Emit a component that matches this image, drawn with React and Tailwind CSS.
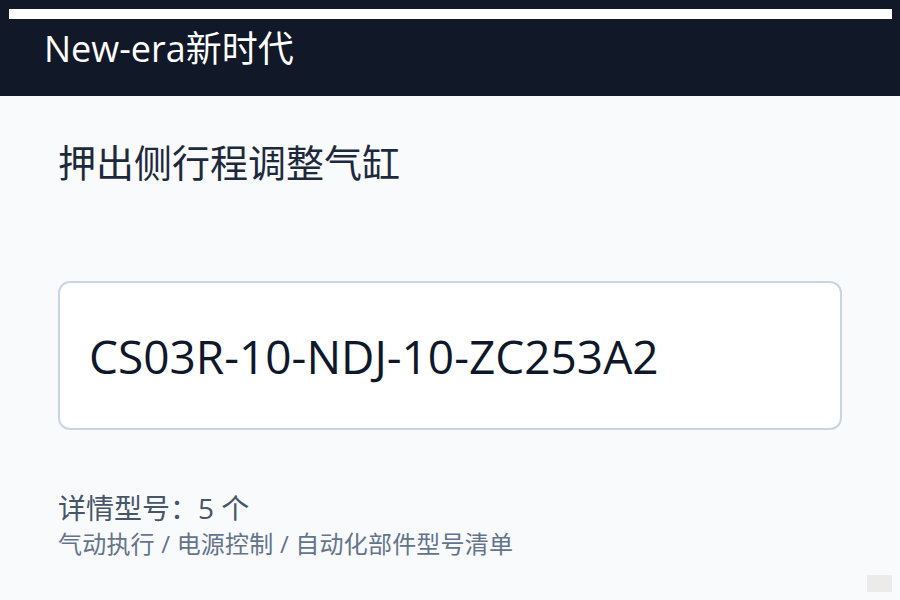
export default function App() {
  const font = { fontFamily: '"Open Sans", "Noto Sans CJK SC", sans-serif' };
  return (
    <div className="relative w-[900px] h-[600px] overflow-hidden bg-[#f8fafc]" style={font}>
      <div className="h-[96px] bg-[#111827] pt-[9px] px-[9px]">
        <div className="h-[10px] bg-white w-[883px]"></div>
        <div className="pl-[35px] pt-[6px] text-[36px] leading-[48px] text-white">New-era新时代</div>
      </div>
      <div className="px-[58px]">
        <div className="pt-[39px] text-[38px] leading-[54px] text-[#1e293b]">押出侧行程调整气缸</div>
        <div className="mt-[92px] h-[149px] w-[784px] rounded-[12px] border-2 border-[#cbd5e1] bg-white flex items-center pl-[29px]">
          <span className="text-[46px] text-[#0f172a] leading-none">CS03R-10-NDJ-10-ZC253A2</span>
        </div>
        <div className="mt-[60px] text-[28px] leading-[36px] text-[#475569]">详情型号：5 个</div>
        <div className="mt-[1px] text-[24px] leading-[34px] tracking-[0.2px] text-[#64748b]">气动执行 / 电源控制 / 自动化部件型号清单</div>
      </div>
      <div className="absolute left-[867px] top-[575px] w-[25px] h-[17px] bg-[#ebebeb]"></div>
    </div>
  );
}
